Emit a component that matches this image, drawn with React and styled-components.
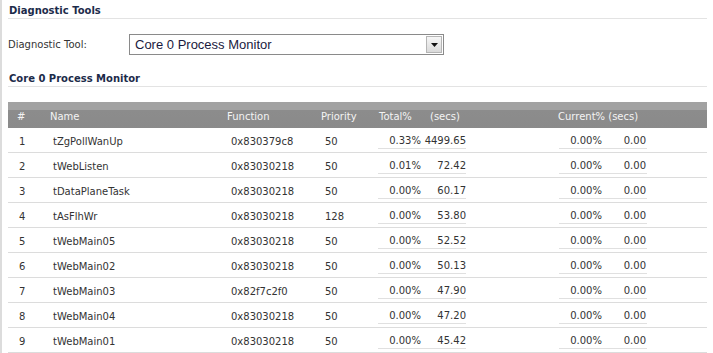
import styled, { createGlobalStyle, css } from 'styled-components';

const GlobalStyle = createGlobalStyle`
  html, body {
    margin: 0;
    padding: 0;
    background: #fff;
  }
  body {
    font-family: "DejaVu Sans", "Liberation Sans", sans-serif;
    font-size: 10px;
    color: #333;
  }
`;

const Page = styled.div`
  min-height: 100vh;
  box-sizing: border-box;
  border-left: 2px solid #dcdcdc;
  padding: 0 6px;
`;

const SectionTitle = styled.div`
  font-weight: bold;
  font-size: 10px;
  line-height: 14px;
  color: #1c2b4a;
  padding: ${(p) => (p.$first ? '4px' : '0')} 0 0 1px;
  margin-top: ${(p) => (p.$first ? '0' : '17px')};
  border-bottom: 1px solid #e3e3e3;
`;

const FormRow = styled.div`
  display: flex;
  align-items: center;
  margin-top: 15px;
  height: 21px;
`;

const Label = styled.label`
  width: 121px;
  color: #333;
`;

const FakeSelect = styled.div`
  width: 315px;
  height: 21px;
  box-sizing: border-box;
  border: 1px solid #8a8a8a;
  display: flex;
  align-items: center;
  justify-content: space-between;
  padding: 0 1px 0 5px;
  font-family: "Liberation Sans", Arial, sans-serif;
  font-size: 13px;
  color: #1a1a40;
`;

const ArrowBtn = styled.span`
  width: 16px;
  height: 17px;
  box-sizing: border-box;
  border: 1px solid #b5b5b5;
  background: linear-gradient(#f6f6f6, #dadada);
  display: flex;
  align-items: center;
  justify-content: center;
`;

const Table = styled.div`
  margin-top: 15px;
`;

const cols = css`
  display: grid;
  grid-template-columns: 32px 177px 94px 59px 105px 75px 107px 1fr;
`;

const HeadRow = styled.div`
  ${cols}
  height: 26px;
  align-items: center;
  background: linear-gradient(#a2a2a2 0, #a2a2a2 8px, #8c8c8c 8px, #8a8a8a 100%);
  color: #f4f4f4;
  padding-top: 2px;
  box-sizing: border-box;
`;

const HeadCell = styled.div`
  padding-left: ${(p) => p.$pad || 10}px;
  white-space: nowrap;
`;

const Row = styled.div`
  ${cols}
  height: 25px;
  box-sizing: border-box;
  border-bottom: 1px solid #dcdcdc;
  align-items: center;
`;

const Cell = styled.div`
  padding-left: ${(p) => p.$pad || 13}px;
  padding-top: 2px;
  white-space: nowrap;
`;

const NumBox = styled.div`
  margin: 4px 0 0 ${(p) => p.$offset}px;
  width: 88px;
  height: 17px;
  box-sizing: border-box;
  border-bottom: 1px solid #e0e0e0;
  display: grid;
  grid-template-columns: ${(p) => (p.$head ? '51px 1fr' : '45px 43px')};
  align-items: center;
  align-self: start;
`;

const Num = styled.span`
  text-align: right;
  padding-right: ${(p) => p.$pr || 0}px;
`;

const HeadNums = styled.div`
  display: grid;
  grid-template-columns: 51px 1fr;
  padding-left: 9px;
`;

const rows = [
  [1, 'tZgPollWanUp', '0x830379c8', 50, '0.33%', '4499.65'],
  [2, 'tWebListen', '0x83030218', 50, '0.01%', '72.42'],
  [3, 'tDataPlaneTask', '0x83030218', 50, '0.00%', '60.17'],
  [4, 'tAsFlhWr', '0x83030218', 128, '0.00%', '53.80'],
  [5, 'tWebMain05', '0x83030218', 50, '0.00%', '52.52'],
  [6, 'tWebMain02', '0x83030218', 50, '0.00%', '50.13'],
  [7, 'tWebMain03', '0x82f7c2f0', 50, '0.00%', '47.90'],
  [8, 'tWebMain04', '0x83030218', 50, '0.00%', '47.20'],
  [9, 'tWebMain01', '0x83030218', 50, '0.00%', '45.42'],
];

const App = () => {
  return (
    <>
      <GlobalStyle />
      <Page>
        <SectionTitle $first>Diagnostic Tools</SectionTitle>
        <FormRow>
          <Label>Diagnostic Tool:</Label>
          <FakeSelect>
            <span>Core 0 Process Monitor</span>
            <ArrowBtn>
              <svg width="7" height="4" viewBox="0 0 7 4">
                <path d="M0 0h7L3.5 4z" fill="#111" />
              </svg>
            </ArrowBtn>
          </FakeSelect>
        </FormRow>
        <SectionTitle>Core 0 Process Monitor</SectionTitle>

        <Table>
          <HeadRow>
            <HeadCell $pad={9}>#</HeadCell>
            <HeadCell>Name</HeadCell>
            <HeadCell>Function</HeadCell>
            <HeadCell>Priority</HeadCell>
            <HeadNums>
              <span>Total%</span>
              <span>(secs)</span>
            </HeadNums>
            <span />
            <HeadCell $pad={8}>Current% (secs)</HeadCell>
            <span />
          </HeadRow>
          {rows.map((r) => (
            <Row key={r[0]}>
              <Cell $pad={11}>{r[0]}</Cell>
              <Cell>{r[1]}</Cell>
              <Cell $pad={14}>{r[2]}</Cell>
              <Cell $pad={14}>{r[3]}</Cell>
              <NumBox $offset={8}>
                <Num $pr={2}>{r[4]}</Num>
                <Num>{r[5]}</Num>
              </NumBox>
              <span />
              <NumBox $offset={9}>
                <Num $pr={2}>0.00%</Num>
                <Num $pr={1}>0.00</Num>
              </NumBox>
              <span />
            </Row>
          ))}
        </Table>
      </Page>
    </>
  );
};

export default App;
